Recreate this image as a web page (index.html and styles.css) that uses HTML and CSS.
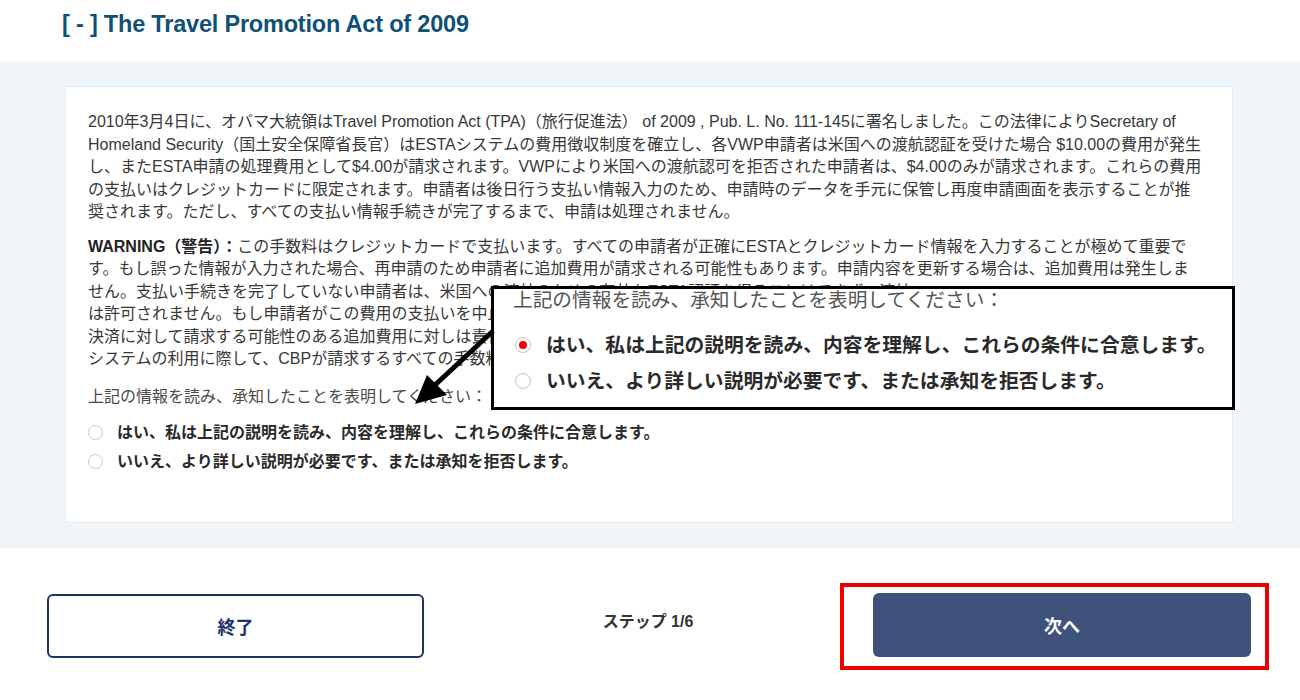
FILE: index.html
```html
<!DOCTYPE html>
<html lang="ja">
<head>
<meta charset="utf-8">
<title>The Travel Promotion Act of 2009</title>
<link rel="stylesheet" href="styles.css">
</head>
<body>
<div class="page">
  <header class="head">
    <h2 class="title">[ - ] The Travel Promotion Act of 2009</h2>
  </header>

  <main class="band">
    <section class="card">
      <p class="para">2010年3月4日に、オバマ大統領はTravel Promotion Act (TPA)（旅行促進法） of 2009 , Pub. L. No. 111-145に署名しました。この法律によりSecretary of Homeland Security（国土安全保障省長官）はESTAシステムの費用徴収制度を確立し、各VWP申請者は米国への渡航認証を受けた場合 $10.00の費用が発生し、またESTA申請の処理費用として$4.00が請求されます。VWPにより米国への渡航認可を拒否された申請者は、$4.00のみが請求されます。これらの費用の支払いはクレジットカードに限定されます。申請者は後日行う支払い情報入力のため、申請時のデータを手元に保管し再度申請画面を表示することが推奨されます。ただし、すべての支払い情報手続きが完了するまで、申請は処理されません。</p>
      <p class="para warn"><strong>WARNING（警告）：</strong>この手数料はクレジットカードで支払います。すべての申請者が正確にESTAとクレジットカード情報を入力することが極めて重要です。もし誤った情報が入力された場合、再申請のため申請者に追加費用が請求される可能性もあります。申請内容を更新する場合は、追加費用は発生しません。支払い手続きを完了していない申請者は、米国への渡航のための有効なESTA認証を得ることはできず、渡航<br>は許可されません。もし申請者がこの費用の支払いを中止した場合、申請者またはその代理として支払いを行った第三者はこの<br>決済に対して請求する可能性のある追加費用に対しは責任を負いません。これらの手数料はESTA<br>システムの利用に際して、CBPが請求するすべての手数料です。</p>
      <p class="ask">上記の情報を読み、承知したことを表明してください：</p>
      <div class="options">
        <label class="opt"><span class="radio"></span>はい、私は上記の説明を読み、内容を理解し、これらの条件に合意します。</label>
        <label class="opt"><span class="radio"></span>いいえ、より詳しい説明が必要です、または承知を拒否します。</label>
      </div>
    </section>
  </main>

  <footer class="foot">
    <button class="btn btn-outline">終了</button>
    <div class="step">ステップ 1/6</div>
    <div class="highlight"><button class="btn btn-fill">次へ</button></div>
  </footer>

  <div class="callout">
    <p class="callout-ask">上記の情報を読み、承知したことを表明してください：</p>
    <div class="callout-opt"><span class="radio big checked"></span>はい、私は上記の説明を読み、内容を理解し、これらの条件に合意します。</div>
    <div class="callout-opt"><span class="radio big"></span>いいえ、より詳しい説明が必要です、または承知を拒否します。</div>
  </div>

  <svg class="arrow" width="100" height="90" viewBox="0 0 100 90">
    <line x1="88" y1="6" x2="30" y2="60" stroke="#000" stroke-width="5"/>
    <polygon points="10,79 22,50 42,70" fill="#000"/>
  </svg>
</div>
</body>
</html>
```

FILE: styles.css
```css
html, body {
  margin: 0;
  padding: 0;
  background: #ffffff;
}

.page {
  position: relative;
  width: 1300px;
  height: 700px;
  overflow: hidden;
  font-family: "Liberation Sans", "Noto Sans CJK JP", sans-serif;
  color: #333333;
}

.head {
  height: 61px;
  padding-left: 62px;
  box-sizing: border-box;
  padding-top: 8px;
}

.title {
  margin: 0;
  font-size: 23.5px;
  font-weight: 700;
  color: #0f5077;
  line-height: 32px;
  letter-spacing: -0.2px;
}

.band {
  background: #f1f6fa;
  padding: 25px 67px 25px 65px;
}

.card {
  background: #ffffff;
  border: 1px solid #e5eaef;
  padding: 24px 28px 40px 22px;
  height: 437px;
  box-sizing: border-box;
}

.para {
  margin: 0 0 12px 0;
  font-size: 16px;
  line-height: 22.5px;
  color: #383838;
}

.warn {
  margin-bottom: 15px;
}

.warn strong {
  font-weight: 700;
  color: #222;
}

.ask {
  margin: 0 0 14px 0;
  font-size: 16px;
  line-height: 22px;
  color: #4a4a4a;
}

.options {
  display: flex;
  flex-direction: column;
  gap: 7px;
}

.opt {
  display: flex;
  align-items: center;
  gap: 14px;
  font-size: 16px;
  line-height: 22px;
  font-weight: 700;
  color: #2a2a2a;
  padding-left: 0;
}

.radio {
  width: 13px;
  height: 13px;
  border: 1.5px solid #cccccc;
  border-radius: 50%;
  background: #fff;
  flex: none;
  display: inline-flex;
  align-items: center;
  justify-content: center;
}

.radio.big {
  width: 14px;
  height: 14px;
  border: 1.5px solid #c4c4c4;
}

.radio.checked::after {
  content: "";
  width: 8px;
  height: 8px;
  border-radius: 50%;
  background: #ee0000;
}

.foot {
  display: grid;
  grid-template-columns: 377px 1fr 429px;
  align-items: center;
  padding: 35px 31px 0 47px;
}

.btn {
  font-family: "Liberation Sans", "Noto Sans CJK JP", sans-serif;
  font-size: 18px;
  font-weight: 700;
  height: 64px;
  border-radius: 6px;
  cursor: pointer;
}

.btn-outline {
  width: 377px;
  background: #fff;
  border: 2px solid #1c3366;
  color: #1c3366;
  margin-top: -1px;
}

.step {
  text-align: center;
  padding-left: 32px;
  font-size: 16px;
  font-weight: 700;
  color: #333;
  margin-top: -14px;
}

.highlight {
  border: 4px solid #ee0000;
  padding: 6px 14px 9px 29px;
}

.btn-fill {
  display: block;
  width: 378px;
  background: #3f527c;
  border: none;
  color: #ffffff;
}

.callout {
  position: absolute;
  left: 491px;
  top: 286px;
  width: 744px;
  height: 124px;
  box-sizing: border-box;
  border: 3px solid #000;
  background: #fff;
  padding: 0 0 0 19px;
}

.callout-ask {
  margin: 0 0 16px 0;
  font-size: 19.7px;
  line-height: 22px;
  color: #555;
}

.callout-opt {
  display: flex;
  align-items: center;
  gap: 15px;
  font-size: 19.8px;
  line-height: 36px;
  font-weight: 700;
  color: #2a2a2a;
  padding-left: 2px;
}

.arrow {
  position: absolute;
  left: 405px;
  top: 325px;
}
```
